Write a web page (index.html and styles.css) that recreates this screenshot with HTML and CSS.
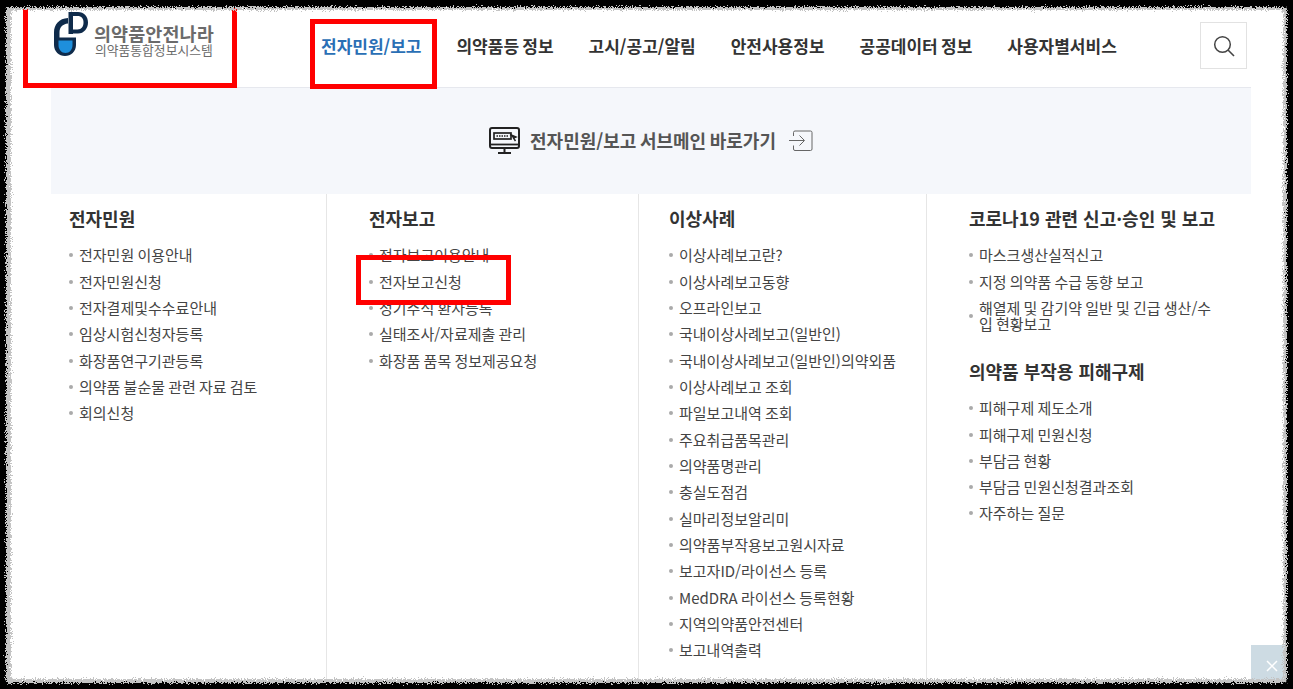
FILE: index.html
```html
<!DOCTYPE html>
<html lang="ko">
<head>
<meta charset="utf-8">
<title>의약품안전나라</title>
<link rel="stylesheet" href="styles.css">
</head>
<body>
<div class="page">
  <header class="header">
    <a class="logo">
      <svg class="logo-mark" viewBox="0 0 36 46" width="36" height="46">
        <path d="M15 7C6 7.500 1 13.500 1 21.500V34C1 40.500 6 45 12 45C18 45 23 40.500 23 34V26.500H6.500V21.500C6.500 16.500 9.500 13 15 12.500Z" fill="#0f2b4b"/>
        <path d="M5.500 29.500H19.500V34C19.500 38.500 16.500 42 12.500 42C8.500 42 5.500 38.500 5.500 34Z" fill="#1e8fdc"/>
        <path d="M15.500 1H25C31 1 35 5.500 35 11.500C35 17.500 31 22.500 25 22.500H15.500V18.500H24.500C28.500 18.500 30.500 15.500 30.500 11.500C30.500 7.500 28.500 5 24.500 5H20V23H15.500Z" fill="#0f2b4b"/>
      </svg>
      <span class="logo-text">
        <span class="logo-name">의약품안전나라</span>
        <span class="logo-sub">의약품통합정보시스템</span>
      </span>
    </a>
    <nav class="nav">
      <a class="nav-item active">전자민원/보고</a>
      <a class="nav-item">의약품등 정보</a>
      <a class="nav-item">고시/공고/알림</a>
      <a class="nav-item">안전사용정보</a>
      <a class="nav-item">공공데이터 정보</a>
      <a class="nav-item">사용자별서비스</a>
    </nav>
    <button class="search" aria-label="검색">
      <svg viewBox="0 0 22 22" width="22" height="22"><circle cx="9.500" cy="9.500" r="7.800" fill="none" stroke="#444" stroke-width="1.500"/><path d="M15 15L21 21" stroke="#444" stroke-width="1.600" fill="none"/></svg>
    </button>
  </header>

  <main class="panel">
    <a class="band">
      <svg class="band-icon" viewBox="0 0 32 28" width="32" height="28">
        <rect x="1" y="1" width="29" height="20" rx="2" fill="none" stroke="#222" stroke-width="2"/>
        <path d="M1 17.500H30" stroke="#222" stroke-width="1.800"/>
        <rect x="5" y="6" width="17" height="6" fill="none" stroke="#222" stroke-width="1.700"/>
        <path d="M7.500 9H19" stroke="#222" stroke-width="1.500" stroke-dasharray="1.500 1"/>
        <path d="M21 7.500L27 10L24.500 11L26.500 14" fill="#222" stroke="#222" stroke-width="1.400"/>
        <path d="M15.500 21V25M9 26H22" stroke="#222" stroke-width="2" fill="none"/>
      </svg>
      <span class="band-text">전자민원/보고 서브메인 바로가기</span>
      <svg class="band-arrow" viewBox="0 0 24 22" width="24" height="22">
        <path d="M4.500 6V2.500A1.500 1.500 0 0 1 6 1H21.500A1.500 1.500 0 0 1 23 2.500V19A1.500 1.500 0 0 1 21.500 20.500H6A1.500 1.500 0 0 1 4.500 19V15.500" fill="none" stroke="#666" stroke-width="1"/>
        <path d="M0 10.500H15M10.500 5.500L15.500 10.500L10.500 15.500" fill="none" stroke="#666" stroke-width="1"/>
      </svg>
    </a>

    <div class="columns">
      <section class="col col-a">
        <h2 class="col-title">전자민원</h2>
        <ul class="list">
          <li>전자민원 이용안내</li>
          <li>전자민원신청</li>
          <li>전자결제및수수료안내</li>
          <li>임상시험신청자등록</li>
          <li>화장품연구기관등록</li>
          <li>의약품 불순물 관련 자료 검토</li>
          <li>회의신청</li>
        </ul>
      </section>
      <section class="col col-b">
        <h2 class="col-title">전자보고</h2>
        <ul class="list">
          <li>전자보고이용안내</li>
          <li>전자보고신청</li>
          <li>정기주석 환자등록</li>
          <li>실태조사/자료제출 관리</li>
          <li>화장품 품목 정보제공요청</li>
        </ul>
      </section>
      <section class="col col-c">
        <h2 class="col-title">이상사례</h2>
        <ul class="list">
          <li>이상사례보고란?</li>
          <li>이상사례보고동향</li>
          <li>오프라인보고</li>
          <li>국내이상사례보고(일반인)</li>
          <li>국내이상사례보고(일반인)의약외품</li>
          <li>이상사례보고 조회</li>
          <li>파일보고내역 조회</li>
          <li>주요취급품목관리</li>
          <li>의약품명관리</li>
          <li>충실도점검</li>
          <li>실마리정보알리미</li>
          <li>의약품부작용보고원시자료</li>
          <li>보고자ID/라이선스 등록</li>
          <li>MedDRA 라이선스 등록현황</li>
          <li>지역의약품안전센터</li>
          <li>보고내역출력</li>
        </ul>
      </section>
      <section class="col col-d">
        <h2 class="col-title">코로나19 관련 신고·승인 및 보고</h2>
        <ul class="list">
          <li>마스크생산실적신고</li>
          <li>지정 의약품 수급 동향 보고</li>
          <li>해열제 및 감기약 일반 및 긴급 생산/수입 현황보고</li>
        </ul>
        <h2 class="col-title second">의약품 부작용 피해구제</h2>
        <ul class="list">
          <li>피해구제 제도소개</li>
          <li>피해구제 민원신청</li>
          <li>부담금 현황</li>
          <li>부담금 민원신청결과조회</li>
          <li>자주하는 질문</li>
        </ul>
      </section>
    </div>
  </main>

  <button class="close" aria-label="닫기">
    <svg viewBox="0 0 12 12" width="12" height="12"><path d="M1 1L11 11M11 1L1 11" stroke="#fff" stroke-width="1.500"/></svg>
  </button>

  <div class="mark mark-logo"></div>
  <div class="mark mark-nav"></div>
  <div class="mark mark-item"></div>

  <svg class="frame" viewBox="0 0 1293 689" width="1293" height="689">
    <defs>
      <filter id="torn" x="-5%" y="-5%" width="110%" height="110%">
        <feTurbulence type="fractalNoise" baseFrequency="0.9" numOctaves="2" seed="4" result="n"/>
        <feDisplacementMap in="SourceGraphic" in2="n" scale="8" xChannelSelector="R" yChannelSelector="G"/>
      </filter>
    </defs>
    <path class="frame-soft" filter="url(#torn)" fill-rule="evenodd" d="M-20 -20H1313V709H-20ZM15 10H1279Q1283 10 1283 14V675Q1283 679 1279 679H15Q11 679 11 675V14Q11 10 15 10Z"/>
    <path class="frame-hard" filter="url(#torn)" fill-rule="evenodd" d="M-20 -20H1313V709H-20ZM10 7H1283Q1287 7 1287 11V679Q1287 683 1283 683H10Q6 683 6 679V11Q6 7 10 7Z"/>
  </svg>
</div>
</body>
</html>
```
FILE: styles.css
```css
* { box-sizing: border-box; }
html, body { margin: 0; padding: 0; }
body {
  background: #fff;
  font-family: "Noto Sans CJK KR", "Noto Sans", sans-serif;
  color: #333;
}
ul { list-style: none; margin: 0; padding: 0; }
h2 { margin: 0; }

.page {
  position: relative;
  width: 1293px;
  height: 689px;
  overflow: hidden;
  background: #fff;
}

.header {
  display: flex;
  align-items: flex-start;
  height: 87px;
  margin: 0 46px 0 53px;
  padding-top: 11px;
}
.logo { display: flex; align-items: flex-start; width: 268px; flex: none; }
.logo-mark { flex: none; }
.logo-text { display: flex; flex-direction: column; margin: 12px 0 0 5px; color: #6b6b6b; }
.logo-name { font-size: 18.500px; line-height: 20px; font-weight: 700; letter-spacing: 0.100px; white-space: nowrap; }
.logo-sub { font-size: 12.800px; line-height: 14px; font-weight: 400; margin-left: 1px; white-space: nowrap; }

.nav { display: flex; gap: 35px; flex: none; padding-top: 9px; }
.nav-item {
  font-size: 17px;
  line-height: 52px;
  height: 67px;
  font-weight: 700;
  color: #333;
  white-space: nowrap;
  word-spacing: -1.500px;
}
.nav-item.active { color: #2a6fb5; border-bottom: 2px solid #2a6fb5; }

.search {
  margin: 11px 0 0 auto;
  width: 47px;
  height: 47px;
  flex: none;
  background: #fff;
  border: 1px solid #e2e2e2;
  padding: 0;
  display: flex;
  align-items: center;
  justify-content: center;
}

.panel { margin: 0 42px 0 51px; }
.band {
  display: flex;
  align-items: center;
  justify-content: center;
  gap: 8px;
  height: 107px;
  background: #f5f7fb;
  border-top: 1px solid #e6e8ee;
}
.band-icon { margin-right: 1px; }
.band-text {
  font-size: 18px;
  font-weight: 700;
  color: #555;
  white-space: nowrap;
  line-height: 26px;
  word-spacing: -1.500px;
  margin-top: -2px;
}
.band-arrow { margin-left: 5px; }

.columns {
  display: grid;
  grid-template-columns: 275px 312px 288px 325px;
  height: 500px;
}
.col { padding-top: 11px; border-left: 1px solid #e6e6e6; }
.col-a { padding-left: 18px; border-left: 0; }
.col-b { padding-left: 42px; }
.col-c { padding-left: 30px; }
.col-d { padding-left: 42px; padding-right: 30px; }

.col-title {
  font-size: 18px;
  line-height: 26px;
  font-weight: 700;
  color: #333;
  margin-bottom: 11.300px;
  white-space: nowrap;
}
.col-title.second { margin-top: 21px; margin-bottom: 10.800px; }

.list li {
  position: relative;
  padding: 5.170px 0 5.170px 10px;
  font-size: 15px;
  line-height: 16px;
  color: #444;
  word-spacing: -1px;
  word-break: break-all;
}
.list li::before {
  content: "";
  position: absolute;
  left: 0;
  top: 50%;
  width: 4px;
  height: 4px;
  margin-top: -2px;
  border-radius: 50%;
  background: #aaa;
}

.close {
  position: absolute;
  left: 1251px;
  top: 645px;
  width: 42px;
  height: 44px;
  padding: 15px 0 0 15px;
  border: 0;
  background: #cddbe3;
  display: flex;
  align-items: flex-start;
}

.mark { position: absolute; border: 5px solid #f00; }
.mark-logo { left: 23px; top: -8px; width: 214px; height: 96px; }
.mark-nav { left: 310px; top: 19px; width: 127px; height: 70px; }
.mark-item { left: 356px; top: 255px; width: 155px; height: 50px; }

.frame { position: absolute; left: 0; top: 0; pointer-events: none; }
.frame-soft { fill: #c4c4c4; }
.frame-hard { fill: #000; }
```
